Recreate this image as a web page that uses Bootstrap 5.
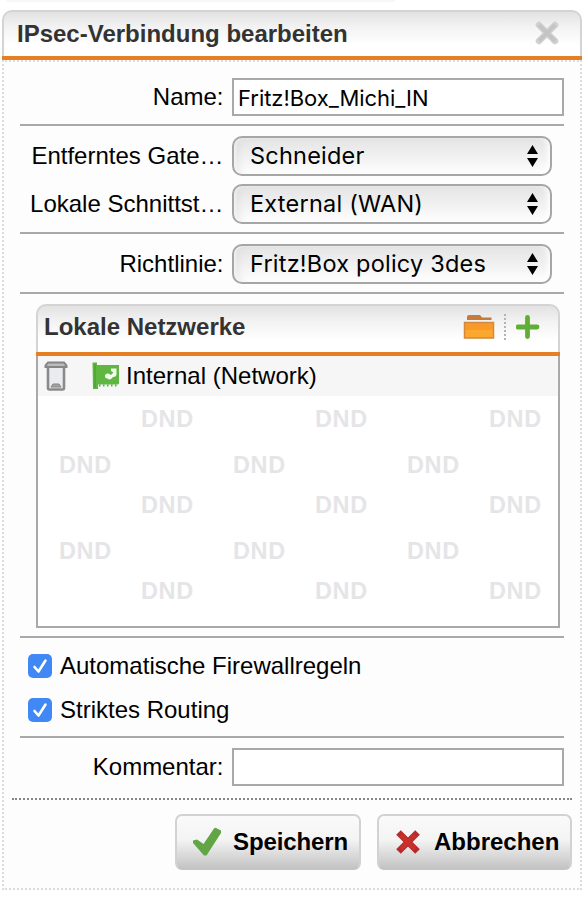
<!DOCTYPE html>
<html lang="de">
<head>
<meta charset="utf-8">
<meta name="viewport" content="width=device-width, initial-scale=1">
<title>IPsec-Verbindung bearbeiten</title>
<link href="https://cdn.jsdelivr.net/npm/bootstrap@5.3.0/dist/css/bootstrap.min.css" rel="stylesheet">
<style>
body{background:#fff;color:#000;font:24px/28px "Liberation Sans",Arial,sans-serif;overflow:hidden}
svg{display:block;flex:none}
.strip{width:389px;height:2px;margin-left:6px;background:#f7f7f7;border-radius:0 0 4px 4px}
.dialog{width:580px;margin:8px 0 0 2px}
.wrapbar{border-bottom:4px solid #e67f22}
.titlebar{height:46px;border:2px solid #d4d4d4;border-bottom:0;border-radius:10px 10px 0 0;background:linear-gradient(#e2e2e2,#f3f3f3 35%,#fff 75%)}
.heading{font-size:24px;line-height:28px;font-weight:700;color:#333;margin:0}
.main-title{padding:0 0 1px 13px}
.close-icon{margin:0 20px 3px 0}
.panel{height:830px;border:2px dotted #dcdcdc;background:#fdfdfd;padding:16px 16px 0}
.rule{width:544px;height:2px;background:#a9a9a9}
.field{height:40px}
.field label{width:203.5px;white-space:nowrap;margin-right:8.5px}
.field .top-label{padding-top:5px}
.textbox.form-control{flex:none;width:332px;height:38px;border:2px solid #a9a9a9;border-radius:0;padding:2px 4px 0;font:22px/30px Inter,sans-serif;color:#000;background:#fff;letter-spacing:-.04px}
.picker{flex:none;width:320px;height:40px;border:2px solid #a6a6a6;border-radius:10px;background:linear-gradient(#e4e4e4,#f3f3f3 60%,#fff);padding:0 12px 0 16px;font:23.5px/34px Inter,sans-serif;letter-spacing:.22px;box-shadow:inset 3px 0 3px -1px #fff9,inset -5px 0 5px -2px #ffffffd0,inset 8px 0 8px -5px #ccc8}
.netbox{width:524px;margin-left:16px}
.netbox .titlebar{height:48px;padding:0 18px 4px 6px}
.netbody{height:272px;border:2px solid #a9a9a9;border-top:0;background:#fff}
.netrow{height:40px;background:#f6f6f6;margin-bottom:3px}
.bin{margin:0 24px 0 6px}
.flag{margin-right:6px}
.dnd{height:40px;font:700 23.5px/41px "Liberation Sans",Arial,sans-serif;color:#e5e5e7;letter-spacing:.6px}
.dnd span{width:174px;flex:none}
.dnd span:last-child{width:auto}
.dnd.far{padding-left:103px;margin-bottom:6px}
.dnd.near{padding-left:21px}
.vdots{height:26px;border-left:2px dotted #b4b4b4;margin:0 10px 0 9px}
.checks{height:44px;padding-left:8px;gap:8px}
.tick{width:24px;height:24px;border-radius:5px;background:#3f88f5}
.dotline{border-top:2px dotted #858585;margin:10px -8px 0}
.actions{margin:14px -8px 0 0;gap:16px}
.action.btn{height:56px;border:2px solid #d2d2d2;border-bottom-color:#c4c4c4;border-radius:7px;background:linear-gradient(#fafafa,#f4f4f4 45%,#c4c4c4);font-size:24px;font-weight:700;line-height:28px;color:#000;padding:0}
.action.save{width:186px;padding-left:15px;gap:11px;letter-spacing:-.1px}
.action.cancel{width:195px;padding-left:16px;gap:13px}
.above-8{margin-top:8px}.above-10{margin-top:10px}.above-6{margin-top:6px}.above-4{margin-top:4px}
</style>
</head>
<body>
<div class="strip"></div>
<main class="dialog">
  <header class="wrapbar">
    <div class="titlebar d-flex justify-content-between align-items-center">
      <h1 class="heading main-title">IPsec-Verbindung bearbeiten</h1>
      <svg class="close-icon" width="26" height="24" viewBox="0 0 26 24"><path d="M5 4L21 20M21 4L5 20" stroke="#d0d0d0" stroke-width="6.500" stroke-linecap="round"/><path d="M5 4L21 20M21 4L5 20" stroke="#c4c4c4" stroke-width="3.500"/></svg>
    </div>
  </header>
  <form class="panel">
    <div class="field d-flex"><label class="text-end top-label" for="name">Name:</label><input class="form-control textbox" id="name" value="Fritz!Box_Michi_IN"></div>
    <div class="rule above-6"></div>
    <div class="field d-flex align-items-center above-10"><label class="text-end">Entferntes Gate…</label><div class="picker d-flex justify-content-between align-items-center"><span>Schneider</span><svg width="11" height="22" viewBox="0 0 11 22"><path d="M5.500 0L11 9H0ZM0 13H11L5.500 22Z"/></svg></div></div>
    <div class="field d-flex align-items-center above-8"><label class="text-end">Lokale Schnittst…</label><div class="picker d-flex justify-content-between align-items-center"><span>External (WAN)</span><svg width="11" height="22" viewBox="0 0 11 22"><path d="M5.500 0L11 9H0ZM0 13H11L5.500 22Z"/></svg></div></div>
    <div class="rule above-8"></div>
    <div class="field d-flex align-items-center above-10"><label class="text-end">Richtlinie:</label><div class="picker d-flex justify-content-between align-items-center"><span>Fritz!Box policy 3des</span><svg width="11" height="22" viewBox="0 0 11 22"><path d="M5.500 0L11 9H0ZM0 13H11L5.500 22Z"/></svg></div></div>
    <div class="rule above-8"></div>
    <section class="netbox above-10">
      <div class="wrapbar">
        <div class="titlebar d-flex align-items-center">
          <h2 class="heading me-auto">Lokale Netzwerke</h2>
          <svg width="32" height="26" viewBox="0 0 32 26"><path d="M4 7V3Q4 1 6 1H17L19 3.500H28.500V6H4Z" fill="#c67a3c"/><path d="M1.500 8.500H30.500V24H1.500Z" fill="#f8992a" stroke="#d18a40" stroke-width="1.500"/><path d="M2.500 16H29.500V23H2.500Z" fill="#fca72e"/></svg>
          <div class="vdots"></div>
          <svg width="24" height="24" viewBox="0 0 24 24"><path d="M11.500 2.500V21.500M2 12H21" stroke="#60ae35" stroke-width="4.800" stroke-linecap="round"/></svg>
        </div>
      </div>
      <div class="netbody">
        <div class="netrow d-flex align-items-center">
          <svg class="bin" width="24" height="30" viewBox="0 0 24 30"><path d="M4 7V27Q4 28.500 5.500 28.500H18.500Q20 28.500 20 27V7" fill="#e9ebee" stroke="#8a8a8a" stroke-width="2.600"/><path d="M1.500 6V4.500L4 1.500H20L22.500 4.500V6Z" fill="#bcbcbc" stroke="#868686" stroke-width="2"/><path d="M7 26L9 23H15L17 26Z" fill="#a5a5a5" stroke="#858585"/></svg>
          <svg class="flag" width="28" height="28" viewBox="0 0 28 28"><path d="M.5.500H5V3H27V21.500L26 22.500H6V27H1Z" fill="#5fb641"/><path d="M3 2V26" stroke="#4aa52e" stroke-width="1.500"/><path d="M7 23.500H26" stroke="#60a84c" stroke-width="2" stroke-dasharray="1.500 2.500"/><path d="M19 6.500H24.500V12.500Q24 15 21 15L19 17Q17 18 15.500 16.500Q12.500 16 13 13.500Q13.500 11 16.500 11.500L19 13L21.500 10.500L19 9Z" fill="#f4fff0"/></svg>
          <span>Internal (Network)</span>
        </div>
        <div class="dnd far d-flex"><span>DND</span><span>DND</span><span>DND</span></div>
        <div class="dnd near d-flex"><span>DND</span><span>DND</span><span>DND</span></div>
        <div class="dnd far d-flex"><span>DND</span><span>DND</span><span>DND</span></div>
        <div class="dnd near d-flex"><span>DND</span><span>DND</span><span>DND</span></div>
        <div class="dnd far d-flex mb-0"><span>DND</span><span>DND</span><span>DND</span></div>
      </div>
    </section>
    <div class="rule above-8"></div>
    <div class="checks d-flex align-items-center above-6"><svg class="tick" viewBox="0 0 24 24" role="img" aria-label="aktiviert"><path d="M6.500 13L10.500 17.500L17.500 6.500" fill="none" stroke="#fff" stroke-width="2.600" stroke-linecap="round" stroke-linejoin="round"/></svg><span>Automatische Firewallregeln</span></div>
    <div class="checks d-flex align-items-center"><svg class="tick" viewBox="0 0 24 24" role="img" aria-label="aktiviert"><path d="M6.500 13L10.500 17.500L17.500 6.500" fill="none" stroke="#fff" stroke-width="2.600" stroke-linecap="round" stroke-linejoin="round"/></svg><span>Striktes Routing</span></div>
    <div class="rule above-4"></div>
    <div class="field d-flex above-10"><label class="text-end top-label" for="comment">Kommentar:</label><input class="form-control textbox" id="comment"></div>
    <div class="dotline"></div>
    <div class="actions d-flex justify-content-end">
      <button type="button" class="btn action save d-flex align-items-center"><svg width="30" height="30" viewBox="0 0 30 30"><path d="M1 16V13.500L5 12.500L11.500 17L22 1.500Q23.500 0 25 1.500L29 3.500V6L14.500 28.500L12 28.500Z" fill="#61a544"/></svg><span>Speichern</span></button>
      <button type="button" class="btn action cancel d-flex align-items-center"><svg width="26" height="26" viewBox="0 0 26 26"><path d="M3.500 3.500L22.500 22.500M22.500 3.500L3.500 22.500" stroke="#b52c2a" stroke-width="6.500"/><path d="M6 6L20 20M20 6L6 20" stroke="#c92f2c" stroke-width="4"/></svg><span>Abbrechen</span></button>
    </div>
  </form>
</main>
<script src="https://cdn.jsdelivr.net/npm/bootstrap@5.3.0/dist/js/bootstrap.bundle.min.js"></script>
</body>
</html>
